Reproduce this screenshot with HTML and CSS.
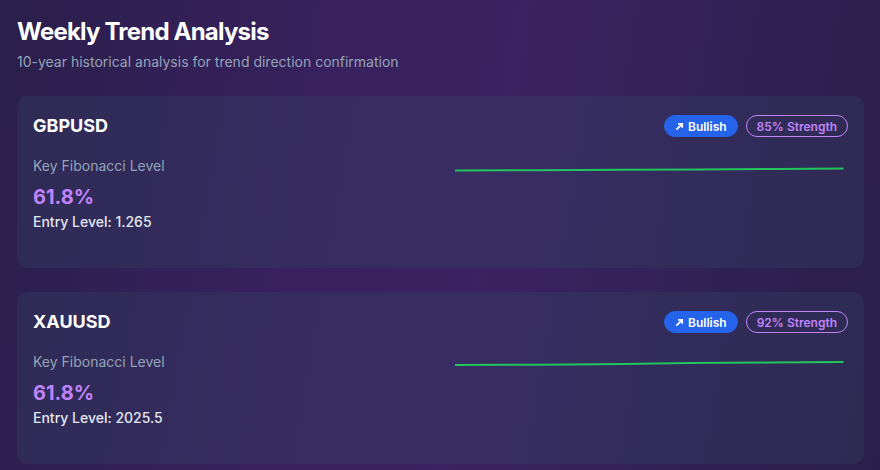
FILE: index.html
```html
<!DOCTYPE html>
<html lang="en">
<head>
    <meta charset="UTF-8">
    <meta name="viewport" content="width=device-width, initial-scale=1.0">
    <title>Weekly Trend Analysis</title>
    <link rel="stylesheet" href="styles.css">
</head>
<body>

<div class="page">
    <h1 class="title">Weekly Trend Analysis</h1>
    <p class="subtitle">10-year historical analysis for trend direction confirmation</p>

    <div class="card">
        <div class="card-head">
            <h2 class="pair">GBPUSD</h2>
            <div class="badges">
                <span class="badge bullish"><svg class="arrow" viewBox="0 0 10 10"><path d="M1.5 8.5 L8 2 M3.5 2 H8 V6.5" /></svg>Bullish</span>
                <span class="badge strength">85% Strength</span>
            </div>
        </div>
        <div class="card-body">
            <div class="info">
                <div class="label">Key Fibonacci Level</div>
                <div class="fib">61.8%</div>
                <div class="entry">Entry Level: 1.265</div>
            </div>
            <svg class="chart" viewBox="0 0 400 96" preserveAspectRatio="none">
                <polyline points="6,14.6 90,14.2 170,13.8 250,13.4 330,12.9 395,12.4" />
            </svg>
        </div>
    </div>

    <div class="card">
        <div class="card-head">
            <h2 class="pair">XAUUSD</h2>
            <div class="badges">
                <span class="badge bullish"><svg class="arrow" viewBox="0 0 10 10"><path d="M1.5 8.5 L8 2 M3.5 2 H8 V6.5" /></svg>Bullish</span>
                <span class="badge strength">92% Strength</span>
            </div>
        </div>
        <div class="card-body">
            <div class="info">
                <div class="label">Key Fibonacci Level</div>
                <div class="fib">61.8%</div>
                <div class="entry">Entry Level: 2025.5</div>
            </div>
            <svg class="chart" viewBox="0 0 400 96" preserveAspectRatio="none">
                <polyline points="6,13 90,12.7 175,12 240,11 320,10.6 395,10" />
            </svg>
        </div>
    </div>
</div>

</body>
</html>
```

FILE: styles.css
```css
body {
    margin: 0;
    font-family: Inter, "Noto Sans", sans-serif;
    color: #fff;
    background: linear-gradient(100deg, #2a1f4b 0%, #38215e 35%, #3b2262 55%, #302153 80%, #2a1f4a 100%);
    height: 470px;
    overflow: hidden;
}

.page {
    padding: 16px 16px 16px 17px;
}

.title {
    margin: 0;
    font-size: 24px;
    line-height: 32px;
    font-weight: 700;
    letter-spacing: -0.8px;
}

.subtitle {
    margin: 4px 0 0;
    font-size: 14px;
    line-height: 20px;
    color: #94a3b8;
}

.card {
    margin-top: 24px;
    padding: 16px;
    border-radius: 10px;
    background: rgba(51, 65, 100, 0.35);
}

.card-head {
    display: flex;
    justify-content: space-between;
    align-items: center;
    margin-bottom: 16px;
}

.pair {
    margin: 0;
    font-size: 18px;
    line-height: 28px;
    font-weight: 700;
}

.badges {
    display: flex;
    gap: 8px;
}

.badge {
    display: inline-flex;
    align-items: center;
    height: 22px;
    padding: 0 10px;
    border-radius: 11px;
    font-size: 12px;
    font-weight: 600;
    box-sizing: border-box;
}

.bullish {
    background: #2563eb;
    border: 1px solid #2563eb;
    color: #fff;
}

.arrow {
    width: 9px;
    height: 9px;
    margin-right: 4px;
}

.arrow path {
    fill: none;
    stroke: #fff;
    stroke-width: 2;
}

.strength {
    border: 1px solid #c084fc;
    color: #c084fc;
}

.card-body {
    display: grid;
    grid-template-columns: 1fr 1fr;
    gap: 16px;
}

.label {
    font-size: 14px;
    line-height: 20px;
    color: #94a3b8;
}

.fib {
    margin-top: 7px;
    font-size: 20px;
    line-height: 28px;
    font-weight: 700;
    color: #c084fc;
}

.entry {
    margin-top: 1px;
    font-size: 14px;
    line-height: 20px;
    font-weight: 500;
    color: #e2e8f0;
}

.chart {
    width: 100%;
    height: 96px;
    display: block;
}

.chart polyline {
    fill: none;
    stroke: #22c55e;
    stroke-width: 2;
}
```
